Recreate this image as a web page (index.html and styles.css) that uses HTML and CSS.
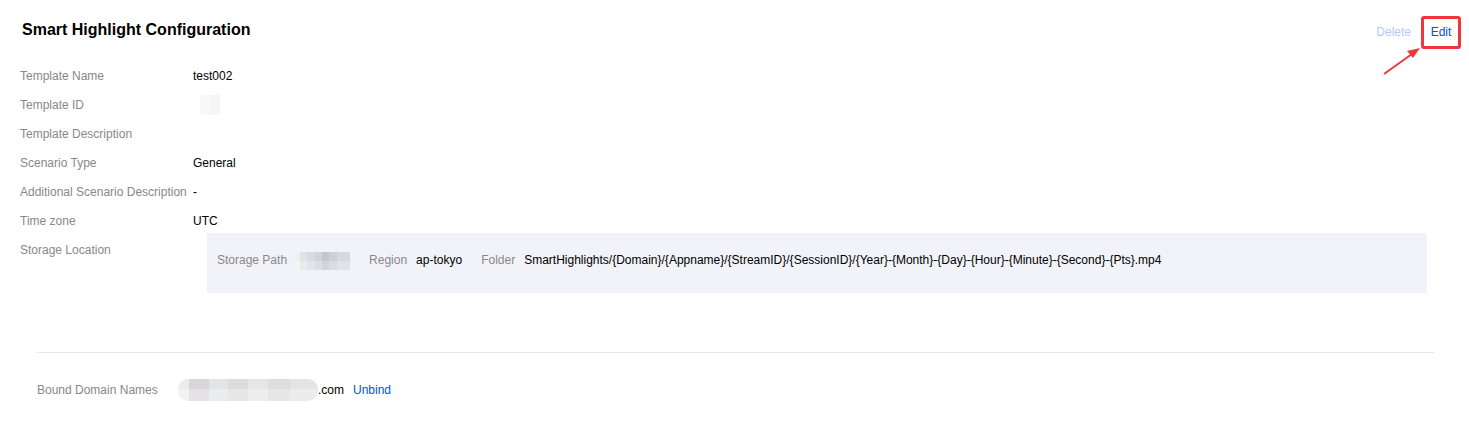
FILE: index.html
```html
<!DOCTYPE html>
<html>
<head>
<meta charset="utf-8">
<link rel="stylesheet" href="styles.css">
</head>
<body>
<div class="page">
  <div class="header">
    <h1 class="title">Smart Highlight Configuration</h1>
    <div class="actions">
      <span class="link disabled">Delete</span>
      <span class="edit-wrap"><span class="link">Edit</span></span>
    </div>
    <svg class="arrow" width="50" height="40" viewBox="0 0 50 40">
      <path d="M2 37 L30 17" stroke="#f0353f" stroke-width="2" fill="none"/>
      <path d="M38 11 L25 14 L31 21 Z" fill="#f0353f"/>
    </svg>
  </div>

  <div class="info">
    <div class="row"><div class="label">Template Name</div><div class="value">test002</div></div>
    <div class="row"><div class="label">Template ID</div><div class="value"><span class="blur blur-id"></span></div></div>
    <div class="row"><div class="label">Template Description</div><div class="value"></div></div>
    <div class="row"><div class="label">Scenario Type</div><div class="value">General</div></div>
    <div class="row"><div class="label">Additional Scenario Description</div><div class="value">-</div></div>
    <div class="row"><div class="label">Time zone</div><div class="value">UTC</div></div>
    <div class="row storage-row">
      <div class="label">Storage Location</div>
      <div class="storage-box">
        <span class="sub-label first">Storage Path</span>
        <span class="blur blur-path"></span>
        <span class="sub-label gap">Region</span>
        <span class="sub-value">ap-tokyo</span>
        <span class="sub-label gap">Folder</span>
        <span class="sub-value">SmartHighlights/{Domain}/{Appname}/{StreamID}/{SessionID}/{Year}-{Month}-{Day}-{Hour}-{Minute}-{Second}-{Pts}.mp4</span>
      </div>
    </div>
  </div>

  <div class="domains">
    <div class="domain-row">
      <span class="domain-label">Bound Domain Names</span>
      <span class="blur blur-domain"></span><span class="domain-value">.com</span>
      <span class="link unbind">Unbind</span>
    </div>
  </div>
</div>
</body>
</html>
```

FILE: styles.css
```css
* { box-sizing: border-box; }
html, body { margin: 0; padding: 0; background: #fff; }
body {
  font-family: "Liberation Sans", Arial, sans-serif;
  font-size: 12px;
  color: #000;
}
.page { width: 1469px; height: 445px; position: relative; }

.header {
  position: relative;
  display: flex;
  justify-content: space-between;
  align-items: flex-start;
  padding: 20px 8px 0 22px;
  height: 62px;
}
.title {
  margin: 0;
  font-family: "Liberation Sans", Arial, sans-serif;
  font-size: 16px;
  font-weight: bold;
  line-height: 20px;
  color: #000;
}
.actions {
  display: flex;
  align-items: center;
  gap: 10px;
  margin-top: -5px;
}
.link { color: #0052d9; font-size: 12px; line-height: 17px; }
.link.disabled { color: #b5c7fb; }
.edit-wrap {
  display: inline-flex;
  align-items: center;
  justify-content: center;
  width: 40px;
  height: 33px;
  margin-top: 1px;
  border: 3px solid #f0353f;
  border-radius: 3px;
}
.arrow { position: absolute; left: 1382px; top: 37px; }

.info { padding-left: 20px; }
.row { display: flex; align-items: flex-start; height: 29px; }
.label {
  width: 173px;
  flex: none;
  color: #888;
  line-height: 17px;
  padding: 6px 0;
}
.value {
  color: #000;
  line-height: 17px;
  padding: 6px 0;
  height: 29px;
}
.storage-row { height: auto; }
.storage-box {
  margin-left: 14px;
  margin-top: -3px;
  width: 1220px;
  height: 60px;
  background: #f2f3f8;
  padding: 19px 10px 0 10px;
  display: flex;
  align-items: flex-start;
}
.sub-label { color: #888; line-height: 17px; margin-right: 9px; }
.sub-label.first { margin-right: 7px; }
.sub-label.gap { margin-left: 19px; }
.sub-value { color: #000; line-height: 17px; }

.blur { display: inline-block; }
.blur-id {
  width: 20px; height: 20px;
  margin: -2px 0 0 7px;
  vertical-align: top;
  background: linear-gradient(to right, #fbf8f8 0 50%, #f4f5f7 50% 100%);
}
.blur-path {
  width: 56px; height: 18px;
  border-radius: 6px 0 0 6px;
  background:
    linear-gradient(to bottom, transparent 0 50%, rgba(255,255,255,0.25) 50% 100%),
    linear-gradient(to right, #eff0f3 0 10%, #e2e3e7 10% 24%, #dadbe0 24% 38%, #d2d3d8 38% 50%, #c4c6cd 50% 62%, #cfd0d5 62% 76%, #d8d9de 76% 100%);
}

.domains {
  margin: 59px 35px 0 37px;
  border-top: 1px solid #e7e7e7;
  padding-top: 26px;
}
.domain-row { display: flex; align-items: center; line-height: 17px; }
.domain-label { color: #888; width: 141px; }
.blur-domain {
  width: 140px; height: 22px;
  border-radius: 10px;
  background:
    linear-gradient(to bottom, transparent 0 45%, rgba(255,255,255,0.3) 45% 100%),
    linear-gradient(to right, #ececec 0 8%, #d8d6d8 8% 22%, #e2e4e6 22% 36%, #dcdcdc 36% 50%, #e6e6e6 50% 64%, #dddddd 64% 80%, #e4e4e4 80% 100%);
}
.domain-value { color: #000; }
.unbind { margin-left: 9px; }
```
